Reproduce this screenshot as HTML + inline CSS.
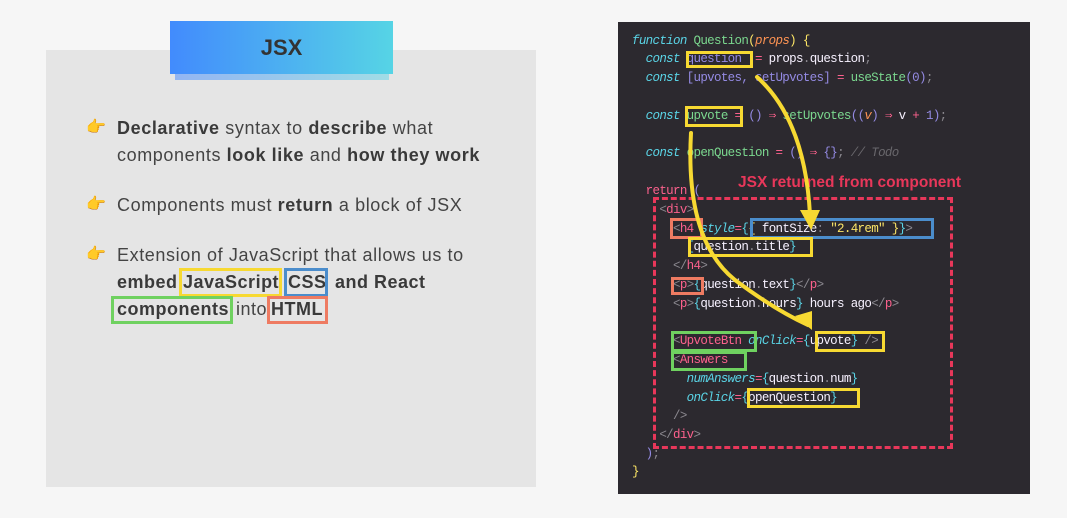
<!DOCTYPE html>
<html><head><meta charset="utf-8"><style>
*{margin:0;padding:0;box-sizing:border-box}
body{width:1067px;height:518px;background:#f6f6f6;position:relative;overflow:hidden;font-family:"Liberation Sans",sans-serif}
.panel{position:absolute;left:46px;top:50px;width:490px;height:437px;background:#e5e5e5}
.shadow{position:absolute;left:175px;top:70px;width:214px;height:10px;background:linear-gradient(90deg,#93b5f2,#a0dce6)}
.banner{position:absolute;left:170px;top:21px;width:223px;height:53px;background:linear-gradient(90deg,#428bfd,#56d4e5);color:#333;font-weight:bold;font-size:22px;text-align:center;line-height:53px}
.t{position:absolute;left:117px;font-size:18px;letter-spacing:0.6px;color:#444;line-height:27px;white-space:nowrap}
.t b{color:#3a3a3a}
.w{position:absolute;font-size:18px;letter-spacing:0.5px;color:#3a3a3a;font-weight:bold;line-height:27px;white-space:nowrap}
.hand{position:absolute;left:86px;font-size:16px}
.box{position:absolute;border:3px solid}
.code{position:absolute;left:618px;top:22px;width:412px;height:472px;background:#2c292f}
.l{position:absolute;left:632px;font-family:"Liberation Mono",monospace;font-size:12.5px;letter-spacing:-0.67px;white-space:pre;color:#f7f1ff;line-height:16px}
.i{font-style:italic}
.cy{color:#5ad4e6}.gr{color:#7bd88f}.or{color:#fd9353}.ye{color:#fce566}.pu{color:#948ae3}.pk{color:#fc618d}.gy{color:#8b888f}.cm{color:#69676c}
</style></head><body>
<div class="panel"></div>
<div class="shadow"></div>
<div class="banner">JSX</div>
<div class="hand" style="top:117px">👉</div>
<div class="hand" style="top:194px">👉</div>
<div class="hand" style="top:244px">👉</div>
<div class="t" style="top:115px"><b>Declarative</b> syntax to <b>describe</b> what</div>
<div class="t" style="top:142px">components <b>look like</b> and <b>how they work</b></div>
<div class="t" style="top:192px">Components must <b>return</b> a block of JSX</div>
<div class="t" style="top:242px">Extension of JavaScript that allows us to</div>
<div class="w" style="top:269px;left:117px">embed</div>
<div class="w" style="top:269px;left:183px">JavaScript</div>
<div class="w" style="top:269px;left:288px">CSS</div>
<div class="w" style="top:269px;left:335px">and React</div>
<div class="w" style="top:296px;left:117px">components</div>
<div class="w" style="top:296px;left:236px;font-weight:normal;color:#444">into</div>
<div class="w" style="top:296px;left:271px">HTML</div>
<div class="box" style="left:179px;top:268px;width:103px;height:29px;border-color:#f7d932"></div>
<div class="box" style="left:284px;top:268px;width:44px;height:29px;border-color:#4b8dcc"></div>
<div class="box" style="left:111px;top:296px;width:122px;height:28px;border-color:#6fd160"></div>
<div class="box" style="left:267px;top:296px;width:61px;height:28px;border-color:#ee7b62"></div>

<div class="code"></div>
<div class="l" style="top:33px"><span class="cy i">function</span> <span class="gr">Question</span><span class="ye">(</span><span class="or i">props</span><span class="ye">)</span> <span class="ye">{</span></div>
<div class="l" style="top:51px">  <span class="cy i">const</span> <span class="pu">question</span>  <span class="pk">=</span> props<span class="gy">.</span>question<span class="gy">;</span></div>
<div class="l" style="top:70px">  <span class="cy i">const</span> <span class="pu">[upvotes, setUpvotes]</span> <span class="pk">=</span> <span class="gr">useState</span><span class="pu">(0)</span><span class="gy">;</span></div>
<div class="l" style="top:108px">  <span class="cy i">const</span> <span class="gr">upvote</span> <span class="pk">=</span> <span class="pu">()</span> <span class="pk">⇒</span> <span class="gr">setUpvotes</span><span class="pu">((</span><span class="or i">v</span><span class="pu">)</span> <span class="pk">⇒</span> v <span class="pk">+</span> <span class="pu">1)</span><span class="gy">;</span></div>
<div class="l" style="top:145px">  <span class="cy i">const</span> <span class="gr">openQuestion</span> <span class="pk">=</span> <span class="pu">()</span> <span class="pk">⇒</span> <span class="pu">{}</span><span class="gy">;</span> <span class="cm i">// Todo</span></div>
<div class="l" style="top:183px">  <span class="pk">return</span> <span class="pu">(</span></div>
<div class="l" style="top:202px">    <span class="gy">&lt;</span><span class="pk">div</span><span class="gy">&gt;</span></div>
<div class="l" style="top:221px">      <span class="gy">&lt;</span><span class="pk">h4</span> <span class="cy i">style</span><span class="pk">=</span><span class="cy">{</span><span class="ye">{</span> fontSize<span class="gy">:</span> <span class="ye">"2.4rem"</span> <span class="ye">}</span><span class="cy">}</span><span class="gy">&gt;</span></div>
<div class="l" style="top:239px">        <span class="cy">{</span>question<span class="gy">.</span>title<span class="cy">}</span></div>
<div class="l" style="top:258px">      <span class="gy">&lt;/</span><span class="pk">h4</span><span class="gy">&gt;</span></div>
<div class="l" style="top:277px">      <span class="gy">&lt;</span><span class="pk">p</span><span class="gy">&gt;</span><span class="cy">{</span>question<span class="gy">.</span>text<span class="cy">}</span><span class="gy">&lt;/</span><span class="pk">p</span><span class="gy">&gt;</span></div>
<div class="l" style="top:296px">      <span class="gy">&lt;</span><span class="pk">p</span><span class="gy">&gt;</span><span class="cy">{</span>question<span class="gy">.</span>hours<span class="cy">}</span> hours ago<span class="gy">&lt;/</span><span class="pk">p</span><span class="gy">&gt;</span></div>
<div class="l" style="top:333px">      <span class="gy">&lt;</span><span class="pk">UpvoteBtn</span> <span class="cy i">onClick</span><span class="pk">=</span><span class="cy">{</span>upvote<span class="cy">}</span> <span class="gy">/&gt;</span></div>
<div class="l" style="top:352px">      <span class="gy">&lt;</span><span class="pk">Answers</span></div>
<div class="l" style="top:371px">        <span class="cy i">numAnswers</span><span class="pk">=</span><span class="cy">{</span>question<span class="gy">.</span>num<span class="cy">}</span></div>
<div class="l" style="top:390px">        <span class="cy i">onClick</span><span class="pk">=</span><span class="cy">{</span>openQuestion<span class="cy">}</span></div>
<div class="l" style="top:408px">      <span class="gy">/&gt;</span></div>
<div class="l" style="top:427px">    <span class="gy">&lt;/</span><span class="pk">div</span><span class="gy">&gt;</span></div>
<div class="l" style="top:446px">  <span class="pu">)</span><span class="gy">;</span></div>
<div class="l" style="top:464px"><span class="ye">}</span></div>

<div style="position:absolute;left:738px;top:174px;color:#e8375a;font-weight:bold;font-size:15.5px">JSX returned from component</div>
<div style="position:absolute;left:653px;top:197px;width:300px;height:252px;border:3px dashed #e8375a"></div>

<div class="box" style="left:686px;top:51px;width:67px;height:17px;border-color:#f7d932"></div>
<div class="box" style="left:685px;top:106px;width:58px;height:21px;border-color:#f7d932"></div>
<div class="box" style="left:750px;top:218px;width:184px;height:21px;border-color:#4b8dcc"></div>
<div class="box" style="left:670px;top:218px;width:33px;height:21px;border-color:#ee7b62"></div>
<div class="box" style="left:688px;top:237px;width:125px;height:20px;border-color:#f7d932"></div>
<div class="box" style="left:671px;top:277px;width:33px;height:18px;border-color:#ee7b62"></div>
<div class="box" style="left:671px;top:331px;width:86px;height:21px;border-color:#6fd160"></div>
<div class="box" style="left:671px;top:351px;width:76px;height:20px;border-color:#6fd160"></div>
<div class="box" style="left:815px;top:331px;width:70px;height:21px;border-color:#f7d932"></div>
<div class="box" style="left:747px;top:388px;width:113px;height:20px;border-color:#f7d932"></div>

<svg style="position:absolute;left:0;top:0" width="1067" height="518">
<g fill="none" stroke="#f7d932" stroke-width="4" stroke-linecap="round">
<path d="M757 77 Q805 120 810 215"/>
<path d="M691 133 Q685 240 735 280 Q775 310 808 325"/>
</g>
<g fill="#f7d932">
<polygon points="800,210 820,210 811,230"/>
<polygon points="795,316 812,311 812,330"/>
</g>
</svg>
</body></html>
